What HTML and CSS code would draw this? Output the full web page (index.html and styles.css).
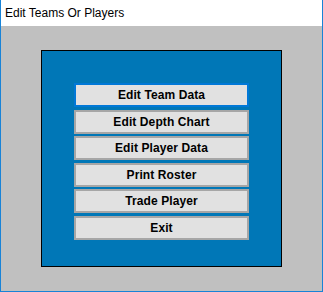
FILE: index.html
```html
<!doctype html>
<html lang="en">
    <head>
        <meta charset="UTF-8" />
        <title>Edit Teams Or Players</title>
        <link rel="stylesheet" href="styles.css">
    </head>
    <body>
        <div class="window">
            <div class="titlebar">Edit Teams Or Players</div>

            <div class="client">
                <!-- Blue frame holding the menu buttons -->
                <div class="panel">
                    <button class="btn focused">Edit Team Data</button>
                    <button class="btn">Edit Depth Chart</button>
                    <button class="btn">Edit Player Data</button>
                    <button class="btn">Print Roster</button>
                    <button class="btn">Trade Player</button>
                    <button class="btn">Exit</button>
                </div>
            </div>
        </div>
    </body>
</html>
```

FILE: styles.css
```css
/* Window frame */
body {
    margin: 0;
    font-family: "Liberation Sans", Arial, sans-serif;
}
.window {
    width: 323px;
    height: 292px;
    box-sizing: border-box;
    border: 1px solid #1883d7;
    border-top: none;
    display: flex;
    flex-direction: column;
    background-color: #fff;
}
.titlebar {
    height: 26px;
    padding-left: 4px;
    font-family: "Liberation Sans", Arial, sans-serif;
    font-size: 12px;
    line-height: 26px;
    color: #000;
}
.client {
    flex: 1;
    background-color: #c0c0c0;
    padding: 24px 0 0 40px;
}

/* Blue panel */
.panel {
    width: 241px;
    height: 217px;
    box-sizing: border-box;
    border: 1px solid #000;
    background-color: #0077b7;
    padding: 32px 32px 0 32px;
    display: flex;
    flex-direction: column;
    gap: 2.5px;
}
.btn {
    height: 24px;
    box-sizing: border-box;
    border: 2px solid #a6a6a6;
    background-color: #e1e1e1;
    font-family: "Liberation Sans", Arial, sans-serif;
    font-weight: bold;
    font-size: 12px;
    letter-spacing: 0.1px;
    color: #000;
    padding: 0;
}
.btn.focused {
    border-color: #0078d7;
}
```
